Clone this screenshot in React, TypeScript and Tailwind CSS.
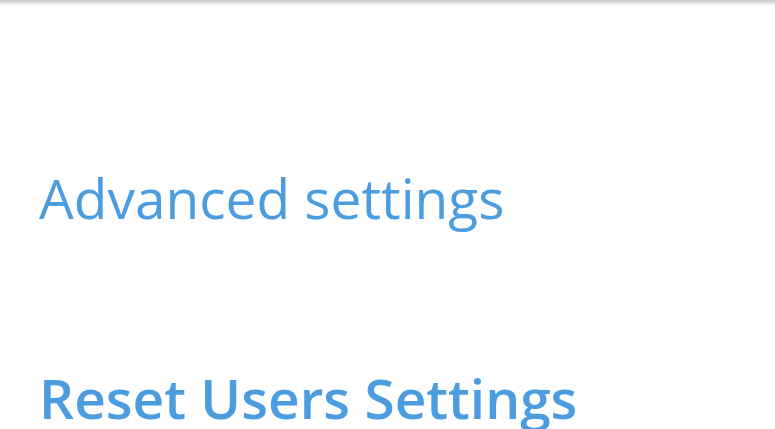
export default function App() {
  return (
    <div
      className="w-[775px] h-[429px] overflow-hidden bg-white relative"
      style={{ fontFamily: '"Open Sans", sans-serif' }}
    >
      <div className="h-[6px] bg-gradient-to-b from-[#c8c8c8] to-white" />
      <div className="pl-[39px] pt-[162px] flex flex-col gap-[140px]">
        <div className="text-[55px] leading-[60px] text-[#4b9de0] whitespace-nowrap">
          Advanced settings
        </div>
        <div className="text-[55px] leading-[60px] font-semibold text-[#4b9de0] whitespace-nowrap">
          Reset Users Settings
        </div>
      </div>
    </div>
  );
}
